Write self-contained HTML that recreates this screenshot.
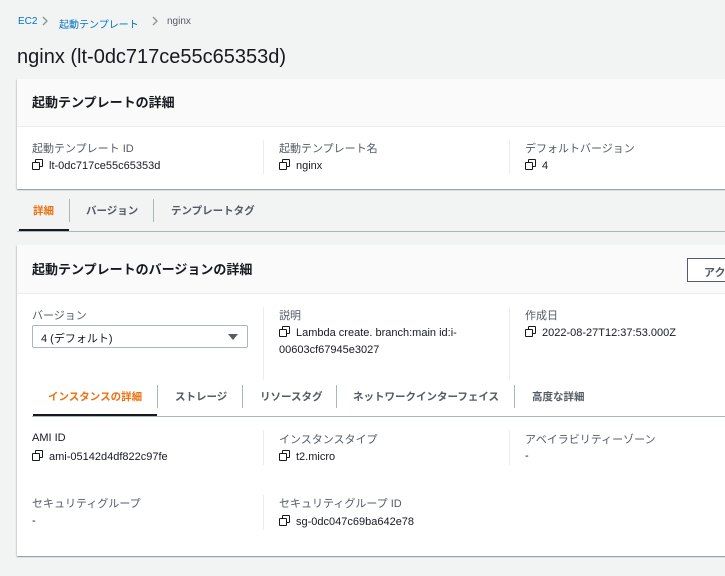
<!DOCTYPE html>
<html><head><meta charset="utf-8"><style>
*{box-sizing:border-box;margin:0;padding:0}
body{width:725px;height:576px;overflow:hidden;background:#f2f3f3;font-family:"Liberation Sans","Noto Sans CJK JP",sans-serif;color:#16191f;position:relative;font-size:11px}
.a{position:absolute;white-space:nowrap}
.card{position:absolute;left:17px;width:720px;background:#fff;box-shadow:0 1px 1px rgba(0,28,36,.3),1px 1px 1px rgba(0,28,36,.1),-1px 1px 1px rgba(0,28,36,.1)}
.hd{background:#fafafa;border-bottom:1px solid #eaeded;position:absolute;left:0;top:0;right:0}
.lbl{color:#545b64;font-size:11px}
.v{font-size:11px;color:#16191f}
.div{position:absolute;width:1px;background:#eaeded}
.ic{display:inline-block;width:11px;height:11px;position:relative;vertical-align:-1px;margin-right:6px}
.ic:before{content:"";position:absolute;left:3px;top:0;width:6px;height:6px;border:1.5px solid #16191f;border-radius:1px}
.ic:after{content:"";position:absolute;left:0;top:3px;width:6px;height:6px;border:1.5px solid #16191f;border-radius:1px;background:#fff}
.tab{font-size:10.5px;font-weight:bold;color:#545b64}
.sep{position:absolute;width:1px;background:#aab7b8}
</style></head><body>
<div class="a" style="left:18px;top:16px;font-size:10px;color:#0073bb">EC2</div>
<svg class="a" style="left:41px;top:15px" width="8" height="12"><path d="M2 2l4 4-4 4" fill="none" stroke="#879596" stroke-width="1.3"/></svg>
<div class="a" style="left:59px;top:16px;font-size:10px;color:#0073bb">起動テンプレート</div>
<svg class="a" style="left:151px;top:15px" width="8" height="12"><path d="M2 2l4 4-4 4" fill="none" stroke="#879596" stroke-width="1.3"/></svg>
<div class="a" style="left:167px;top:16px;font-size:10px;color:#545b64">nginx</div>
<div class="a" style="left:17px;top:46px;font-size:20px;color:#16191f">nginx (lt-0dc717ce55c65353d)</div>

<div class="card" style="top:79px;height:110px">
 <div class="hd" style="height:48px"></div>
 <div class="a" style="left:15px;top:13px;font-size:13px;font-weight:bold">起動テンプレートの詳細</div>
 <div class="a lbl" style="left:15px;top:61px">起動テンプレート ID</div>
 <div class="a v" style="left:15px;top:80px"><span class="ic"></span>lt-0dc717ce55c65353d</div>
 <div class="div" style="left:246px;top:61px;height:34px"></div>
 <div class="a lbl" style="left:262px;top:61px">起動テンプレート名</div>
 <div class="a v" style="left:262px;top:80px"><span class="ic"></span>nginx</div>
 <div class="div" style="left:492px;top:61px;height:34px"></div>
 <div class="a lbl" style="left:508px;top:61px">デフォルトバージョン</div>
 <div class="a v" style="left:508px;top:80px"><span class="ic"></span>4</div>
</div>

<div class="a tab" style="left:33px;top:203px;color:#ec7211">詳細</div>
<div class="sep" style="left:69px;top:199px;height:23px"></div>
<div class="a tab" style="left:86px;top:203px">バージョン</div>
<div class="sep" style="left:153px;top:199px;height:23px"></div>
<div class="a tab" style="left:171px;top:203px">テンプレートタグ</div>
<div class="a" style="left:19px;top:229px;width:50px;height:3px;background:#16191f"></div>
<div class="a" style="left:17px;top:231px;width:710px;height:1px;background:#aab7b8"></div>

<div class="card" style="top:245px;height:311px">
 <div class="hd" style="height:49px"></div>
 <div class="a" style="left:15px;top:14px;font-size:13px;font-weight:bold">起動テンプレートのバージョンの詳細</div>
 <div class="a" style="left:670px;top:13px;width:60px;height:24px;border:1px solid #545b64;background:#fff;font-size:11px;font-weight:bold;color:#545b64;padding:5px 0 0 16px">アク</div>
 <div class="a lbl" style="left:15px;top:62px">バージョン</div>
 <div class="a" style="left:15px;top:80px;width:216px;height:23px;border:1px solid #aab7b8;border-radius:2px;font-size:11px;padding:4px 0 0 8px">4 (デフォルト)<span style="position:absolute;right:9px;top:8px;border-left:5px solid transparent;border-right:5px solid transparent;border-top:6px solid #545b64"></span></div>
 <div class="div" style="left:246px;top:62px;height:73px"></div>
 <div class="a lbl" style="left:262px;top:62px">説明</div>
 <div class="a v" style="left:262px;top:81px"><span class="ic"></span>Lambda create. branch:main id:i-</div>
 <div class="a v" style="left:262px;top:99px">00603cf67945e3027</div>
 <div class="div" style="left:492px;top:62px;height:73px"></div>
 <div class="a lbl" style="left:508px;top:62px">作成日</div>
 <div class="a v" style="left:508px;top:81px"><span class="ic"></span>2022-08-27T12:37:53.000Z</div>

 <div class="a tab" style="left:31px;top:144px;color:#ec7211">インスタンスの詳細</div>
 <div class="sep" style="left:140px;top:140px;height:23px"></div>
 <div class="a tab" style="left:158px;top:144px">ストレージ</div>
 <div class="sep" style="left:225px;top:140px;height:23px"></div>
 <div class="a tab" style="left:243px;top:144px">リソースタグ</div>
 <div class="sep" style="left:319px;top:140px;height:23px"></div>
 <div class="a tab" style="left:336px;top:144px">ネットワークインターフェイス</div>
 <div class="sep" style="left:497px;top:140px;height:23px"></div>
 <div class="a tab" style="left:515px;top:144px">高度な詳細</div>
 <div class="a" style="left:16px;top:169px;width:124px;height:3px;background:#16191f"></div>
 <div class="a" style="left:15px;top:171px;width:710px;height:1px;background:#aab7b8"></div>

 <div class="a lbl" style="left:15px;top:187px;color:#16191f">AMI ID</div>
 <div class="a v" style="left:15px;top:205px"><span class="ic"></span>ami-05142d4df822c97fe</div>
 <div class="div" style="left:246px;top:185px;height:35px"></div>
 <div class="a lbl" style="left:262px;top:186px">インスタンスタイプ</div>
 <div class="a v" style="left:262px;top:205px"><span class="ic"></span>t2.micro</div>
 <div class="div" style="left:492px;top:185px;height:35px"></div>
 <div class="a lbl" style="left:508px;top:186px">アベイラビリティーゾーン</div>
 <div class="a v" style="left:508px;top:205px">-</div>

 <div class="a lbl" style="left:15px;top:250px">セキュリティグループ</div>
 <div class="a v" style="left:15px;top:270px">-</div>
 <div class="div" style="left:246px;top:250px;height:35px"></div>
 <div class="a lbl" style="left:262px;top:250px">セキュリティグループ ID</div>
 <div class="a v" style="left:262px;top:270px"><span class="ic"></span>sg-0dc047c69ba642e78</div>
</div>
</body></html>
